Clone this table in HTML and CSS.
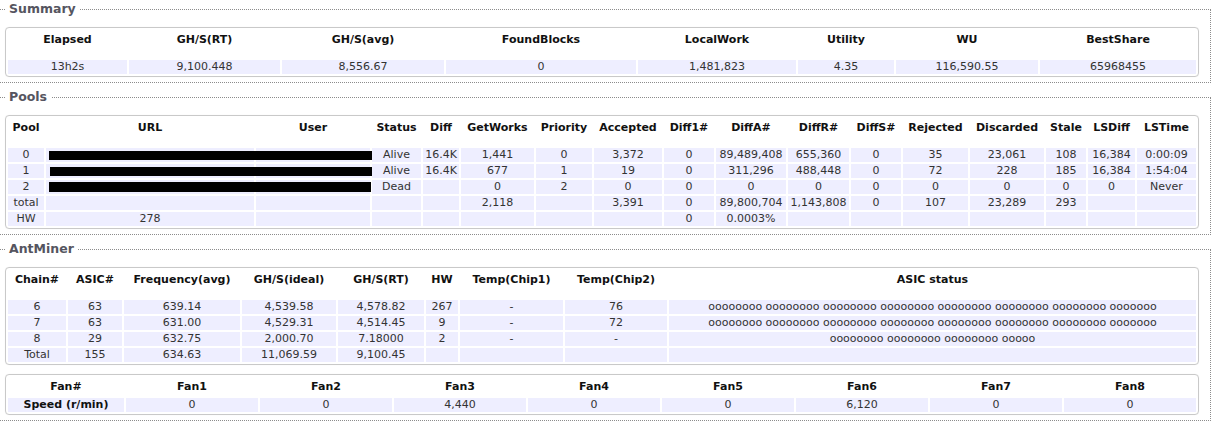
FILE: index.html
```html
<!DOCTYPE html>
<html>
<head>
<meta charset="utf-8">
<title>Miner Status</title>
<link rel="stylesheet" href="styles.css">
</head>
<body>
<fieldset class="sec">
  <legend>Summary</legend>
  <table class="tbl sum">
    <colgroup><col><col><col><col><col><col><col><col></colgroup>
    <tr class="titles"><th>Elapsed</th><th>GH/S(RT)</th><th>GH/S(avg)</th><th>FoundBlocks</th><th>LocalWork</th><th>Utility</th><th>WU</th><th>BestShare</th></tr>
    <tr><td>13h2s</td><td>9,100.448</td><td>8,556.67</td><td>0</td><td>1,481,823</td><td>4.35</td><td>116,590.55</td><td>65968455</td></tr>
  </table>
</fieldset>

<fieldset class="sec">
  <legend>Pools</legend>
  <table class="tbl pools">
    <colgroup><col><col><col><col><col><col><col><col><col><col><col><col><col><col><col><col><col></colgroup>
    <tr class="titles"><th>Pool</th><th>URL</th><th>User</th><th>Status</th><th>Diff</th><th>GetWorks</th><th>Priority</th><th>Accepted</th><th>Diff1#</th><th>DiffA#</th><th>DiffR#</th><th>DiffS#</th><th>Rejected</th><th>Discarded</th><th>Stale</th><th>LSDiff</th><th>LSTime</th></tr>
    <tr><td>0</td><td class="url"><span class="redact"></span></td><td></td><td>Alive</td><td>16.4K</td><td>1,441</td><td>0</td><td>3,372</td><td>0</td><td>89,489,408</td><td>655,360</td><td>0</td><td>35</td><td>23,061</td><td>108</td><td>16,384</td><td>0:00:09</td></tr>
    <tr><td>1</td><td class="url"><span class="redact r1"></span></td><td></td><td>Alive</td><td>16.4K</td><td>677</td><td>1</td><td>19</td><td>0</td><td>311,296</td><td>488,448</td><td>0</td><td>72</td><td>228</td><td>185</td><td>16,384</td><td>1:54:04</td></tr>
    <tr><td>2</td><td class="url"><span class="redact r2"></span></td><td></td><td>Dead</td><td></td><td>0</td><td>2</td><td>0</td><td>0</td><td>0</td><td>0</td><td>0</td><td>0</td><td>0</td><td>0</td><td>0</td><td>Never</td></tr>
    <tr><td>total</td><td></td><td></td><td></td><td></td><td>2,118</td><td></td><td>3,391</td><td>0</td><td>89,800,704</td><td>1,143,808</td><td>0</td><td>107</td><td>23,289</td><td>293</td><td></td><td></td></tr>
    <tr><td>HW</td><td>278</td><td></td><td></td><td></td><td></td><td></td><td></td><td>0</td><td>0.0003%</td><td></td><td></td><td></td><td></td><td></td><td></td><td></td></tr>
  </table>
</fieldset>

<fieldset class="sec">
  <legend>AntMiner</legend>
  <table class="tbl chains">
    <colgroup><col><col><col><col><col><col><col><col><col></colgroup>
    <tr class="titles"><th>Chain#</th><th>ASIC#</th><th>Frequency(avg)</th><th>GH/S(ideal)</th><th>GH/S(RT)</th><th>HW</th><th>Temp(Chip1)</th><th>Temp(Chip2)</th><th>ASIC status</th></tr>
    <tr><td>6</td><td>63</td><td>639.14</td><td>4,539.58</td><td>4,578.82</td><td>267</td><td>-</td><td>76</td><td>oooooooo oooooooo oooooooo oooooooo oooooooo oooooooo oooooooo ooooooo</td></tr>
    <tr><td>7</td><td>63</td><td>631.00</td><td>4,529.31</td><td>4,514.45</td><td>9</td><td>-</td><td>72</td><td>oooooooo oooooooo oooooooo oooooooo oooooooo oooooooo oooooooo ooooooo</td></tr>
    <tr><td>8</td><td>29</td><td>632.75</td><td>2,000.70</td><td>7.18000</td><td>2</td><td>-</td><td>-</td><td>oooooooo oooooooo oooooooo ooooo</td></tr>
    <tr><td>Total</td><td>155</td><td>634.63</td><td>11,069.59</td><td>9,100.45</td><td></td><td></td><td></td><td></td></tr>
  </table>
  <table class="tbl fans">
    <colgroup><col><col><col><col><col><col><col><col><col></colgroup>
    <tr class="titles short"><th>Fan#</th><th>Fan1</th><th>Fan2</th><th>Fan3</th><th>Fan4</th><th>Fan5</th><th>Fan6</th><th>Fan7</th><th>Fan8</th></tr>
    <tr><td class="lbl">Speed (r/min)</td><td>0</td><td>0</td><td>4,440</td><td>0</td><td>0</td><td>6,120</td><td>0</td><td>0</td></tr>
  </table>
</fieldset>
</body>
</html>
```

FILE: styles.css
```css
html, body {
  margin: 0;
  padding: 0;
  background: #ffffff;
}

body {
  font-family: Verdana, "DejaVu Sans", sans-serif;
  font-size: 11px;
  color: #333333;
}

.sec {
  margin: 0 2px 5px -7px;
  padding: 9px 11px 5px 11px;
  border: 1px dotted #8c8c8c;
  min-width: 0;
}

.sec legend {
  padding: 0 4px;
  font-size: 12.5px;
  font-weight: bold;
  line-height: 18px;
  color: #555560;
}

.tbl {
  width: 100%;
  table-layout: fixed;
  border-collapse: separate;
  border-spacing: 2px;
  border: 1px solid #c9c9c9;
  border-radius: 4px;
  box-shadow: 0 0 1px rgba(0, 0, 0, 0.08);
}

.tbl th,
.tbl td {
  padding: 0;
  text-align: center;
  line-height: 14px;
  white-space: nowrap;
  overflow: visible;
}

.tbl th {
  padding: 3px 0 11px 0;
  font-weight: bold;
  color: #111111;
  background: #ffffff;
}

.tbl .titles.short th {
  padding: 3px 0 2px 0;
}

.tbl td {
  background: #eeeeff;
  color: #333333;
}

.tbl td.lbl {
  font-weight: bold;
  color: #111111;
}

.chains {
  margin-bottom: 9px;
}

/* column widths */
.sum col:nth-child(1) { width: 119px; }
.sum col:nth-child(2) { width: 151px; }
.sum col:nth-child(3) { width: 162px; }
.sum col:nth-child(4) { width: 190px; }
.sum col:nth-child(5) { width: 158px; }
.sum col:nth-child(6) { width: 96px; }
.sum col:nth-child(7) { width: 142px; }
.sum col:nth-child(8) { width: 156px; }

.pools col:nth-child(1) { width: 36px; }
.pools col:nth-child(2) { width: 208px; }
.pools col:nth-child(3) { width: 114px; }
.pools col:nth-child(4) { width: 49px; }
.pools col:nth-child(5) { width: 36px; }
.pools col:nth-child(6) { width: 73px; }
.pools col:nth-child(7) { width: 56px; }
.pools col:nth-child(8) { width: 68px; }
.pools col:nth-child(9) { width: 50px; }
.pools col:nth-child(10) { width: 70px; }
.pools col:nth-child(11) { width: 61px; }
.pools col:nth-child(12) { width: 50px; }
.pools col:nth-child(13) { width: 65px; }
.pools col:nth-child(14) { width: 74px; }
.pools col:nth-child(15) { width: 40px; }
.pools col:nth-child(16) { width: 47px; }
.pools col:nth-child(17) { width: 59px; }

.chains col:nth-child(1) { width: 58px; }
.chains col:nth-child(2) { width: 54px; }
.chains col:nth-child(3) { width: 116px; }
.chains col:nth-child(4) { width: 94px; }
.chains col:nth-child(5) { width: 86px; }
.chains col:nth-child(6) { width: 32px; }
.chains col:nth-child(7) { width: 103px; }
.chains col:nth-child(8) { width: 102px; }
.chains col:nth-child(9) { width: 527px; }

.fans col { width: 132px; }
.fans col:nth-child(1) { width: 116px; }

/* redacted pool URL / user */
.pools td.url {
  position: relative;
}

.redact {
  position: absolute;
  left: 3px;
  top: 3px;
  width: 323px;
  height: 9px;
  background: #000000;
}

.redact.r1 {
  left: 4px;
  width: 322px;
}

.redact.r2 {
  top: 2px;
  width: 322px;
  height: 10px;
}
```
